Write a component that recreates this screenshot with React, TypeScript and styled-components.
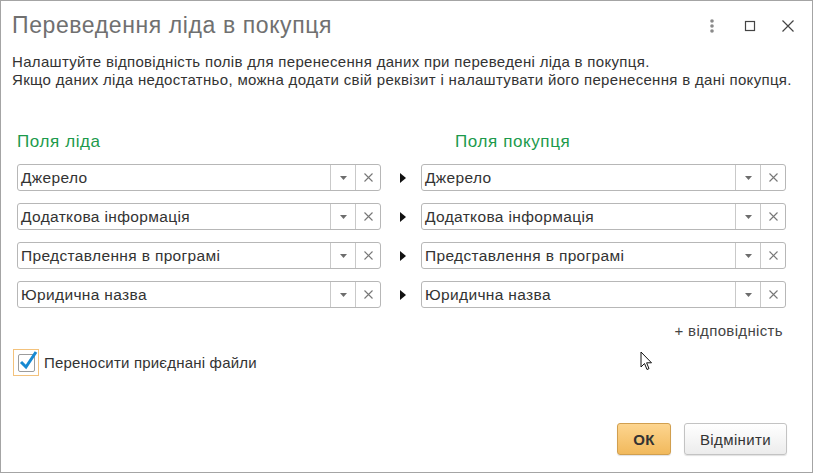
import React, { useState } from 'react';
import styled, { createGlobalStyle } from 'styled-components';

const GlobalStyle = createGlobalStyle`
  html, body {
    margin: 0;
    padding: 0;
    background: #fff;
  }
  body {
    font-family: "Liberation Sans", Arial, sans-serif;
    color: #333;
  }
  * {
    box-sizing: border-box;
  }
`;

const Window = styled.div`
  position: relative;
  width: 813px;
  height: 473px;
  border: 1px solid #a4a4a4;
  background: #fff;
  display: flex;
  flex-direction: column;
`;

const Header = styled.div`
  height: 49px;
  display: flex;
  align-items: center;
  padding: 0 16px 0 11px;
`;

const Title = styled.div`
  flex: 1;
  font-size: 23px;
  letter-spacing: 0.6px;
  color: #707070;
`;

const HeaderTools = styled.div`
  display: flex;
  align-items: center;
  gap: 22px;
`;

const ToolButton = styled.button`
  width: 16px;
  height: 16px;
  padding: 0;
  border: none;
  background: none;
  display: flex;
  align-items: center;
  justify-content: center;
  cursor: pointer;
`;

const Description = styled.div`
  margin-top: 3px;
  padding: 0 11px;
  font-size: 15px;
  letter-spacing: 0.32px;
  line-height: 18px;
  color: #333;
`;

const Columns = styled.div`
  margin-top: 43px;
  padding: 0 26px 0 16px;
  display: grid;
  grid-template-columns: 364px 40px 1fr;
  row-gap: 12px;
  align-items: center;
`;

const ColumnTitle = styled.div<{ $indent?: number }>`
  font-size: 17px;
  letter-spacing: 0.6px;
  line-height: 20px;
  color: #1c9a4c;
  padding-left: ${p => p.$indent || 0}px;
`;

const Field = styled.div`
  height: 27px;
  display: flex;
  border: 1px solid #b7b7b7;
  border-radius: 3px;
  background: #fff;
`;

const FieldText = styled.div`
  flex: 1;
  padding-left: 3px;
  font-size: 15.5px;
  letter-spacing: 0.35px;
  line-height: 26px;
  color: #333;
  white-space: nowrap;
  overflow: hidden;
`;

const FieldButton = styled.div<{ $width: number }>`
  width: ${p => p.$width}px;
  border-left: 1px solid #c9c9c9;
  display: flex;
  align-items: center;
  justify-content: center;
`;

const Transfer = styled.div`
  display: flex;
  justify-content: center;
  padding-left: 3px;
`;

const AddLink = styled.div`
  margin-top: 14px;
  padding-right: 29px;
  text-align: right;
  font-size: 15px;
  letter-spacing: 0.35px;
  line-height: 18px;
  color: #444;
  cursor: pointer;
`;

const CheckRow = styled.label`
  margin-top: 9px;
  margin-left: 12px;
  display: flex;
  align-items: center;
  gap: 5px;
  cursor: pointer;
`;

const CheckFrame = styled.span`
  width: 26px;
  height: 27px;
  border: 1px solid #f3c27c;
  display: flex;
  align-items: center;
  justify-content: center;
`;

const CheckBox = styled.span`
  width: 17px;
  height: 18px;
  border: 1px solid #9c9c9c;
  border-radius: 2px;
  position: relative;
`;

const CheckMark = styled.svg`
  position: absolute;
  left: -1px;
  top: -6px;
`;

const CheckLabel = styled.span`
  font-size: 15px;
  letter-spacing: 0.2px;
  color: #333;
`;

const Footer = styled.div`
  margin-top: auto;
  padding: 0 25px 17px 0;
  display: flex;
  justify-content: flex-end;
  gap: 13px;
`;

const DialogButton = styled.button<{ $primary?: boolean }>`
  height: 32px;
  padding: 0 14px;
  min-width: ${p => (p.$primary ? 54 : 103)}px;
  border-radius: 3px;
  font-family: "Liberation Sans", Arial, sans-serif;
  font-size: 15px;
  letter-spacing: 0.4px;
  font-weight: ${p => (p.$primary ? 700 : 400)};
  color: #333;
  border: 1px solid ${p => (p.$primary ? '#d19f4f' : '#c3c3c3')};
  background: ${p =>
    p.$primary
      ? 'linear-gradient(#fdd58f, #f1b95c)'
      : 'linear-gradient(#ffffff, #ececec)'};
  box-shadow: 0 1px 1px rgba(0, 0, 0, 0.12);
  cursor: pointer;
`;

const Pointer = styled.svg`
  position: absolute;
  left: 639px;
  top: 350px;
  pointer-events: none;
`;

const DotsIcon = () => (
  <svg width="6" height="16" viewBox="0 0 6 16">
    <circle cx="3" cy="3" r="1.8" fill="#8a8a8a" />
    <circle cx="3" cy="8" r="1.8" fill="#8a8a8a" />
    <circle cx="3" cy="13" r="1.8" fill="#8a8a8a" />
  </svg>
);

const MaximizeIcon = () => (
  <svg width="12" height="12" viewBox="0 0 12 12">
    <rect x="1.5" y="1.5" width="9" height="9" fill="none" stroke="#444" strokeWidth="1.2" />
  </svg>
);

const CloseIcon = () => (
  <svg width="14" height="14" viewBox="0 0 14 14">
    <path d="M1.5 1.5 L12.5 12.5 M12.5 1.5 L1.5 12.5" stroke="#444" strokeWidth="1.2" />
  </svg>
);

const DropIcon = () => (
  <svg width="7" height="4" viewBox="0 0 7 4">
    <path d="M0 0 H7 L3.5 4 Z" fill="#6d6d6d" />
  </svg>
);

const ClearIcon = () => (
  <svg width="9" height="9" viewBox="0 0 9 9">
    <path d="M0.5 0.5 L8.5 8.5 M8.5 0.5 L0.5 8.5" stroke="#777" strokeWidth="1.1" />
  </svg>
);

const ArrowIcon = () => (
  <svg width="6" height="10" viewBox="0 0 6 10">
    <path d="M0 0 L6 5 L0 10 Z" fill="#111" />
  </svg>
);

const SelectField = ({ value }: { value: string }) => (
  <Field>
    <FieldText>{value}</FieldText>
    <FieldButton $width={25}>
      <DropIcon />
    </FieldButton>
    <FieldButton $width={25}>
      <ClearIcon />
    </FieldButton>
  </Field>
);

const mapping: [string, string][] = [
  ['Джерело', 'Джерело'],
  ['Додаткова інформація', 'Додаткова інформація'],
  ['Представлення в програмі', 'Представлення в програмі'],
  ['Юридична назва', 'Юридична назва'],
];

export default function App() {
  const [withFiles, setWithFiles] = useState(true);

  return (
    <>
      <GlobalStyle />
      <Window>
        <Header>
          <Title>Переведення ліда в покупця</Title>
          <HeaderTools>
            <ToolButton>
              <DotsIcon />
            </ToolButton>
            <ToolButton>
              <MaximizeIcon />
            </ToolButton>
            <ToolButton>
              <CloseIcon />
            </ToolButton>
          </HeaderTools>
        </Header>

        <Description>
          Налаштуйте відповідність полів для перенесення даних при переведені ліда в покупця.
          <br />
          Якщо даних ліда недостатньо, можна додати свій реквізит і налаштувати його перенесення в дані покупця.
        </Description>

        <Columns>
          <ColumnTitle>Поля ліда</ColumnTitle>
          <div />
          <ColumnTitle $indent={34}>Поля покупця</ColumnTitle>
          {mapping.map(([from, to], i) => (
            <React.Fragment key={i}>
              <SelectField value={from} />
              <Transfer>
                <ArrowIcon />
              </Transfer>
              <SelectField value={to} />
            </React.Fragment>
          ))}
        </Columns>

        <AddLink>+ відповідність</AddLink>

        <CheckRow onClick={() => setWithFiles(v => !v)}>
          <CheckFrame>
            <CheckBox>
              {withFiles && (
                <CheckMark width="20" height="22" viewBox="0 0 20 22">
                  <path d="M3 13 L8 18 L18 3" fill="none" stroke="#1689d2" strokeWidth="3" />
                </CheckMark>
              )}
            </CheckBox>
          </CheckFrame>
          <CheckLabel>Переносити приєднані файли</CheckLabel>
        </CheckRow>

        <Footer>
          <DialogButton $primary>ОК</DialogButton>
          <DialogButton>Відмінити</DialogButton>
        </Footer>

        <Pointer width="13" height="21" viewBox="0 0 13 21">
          <path
            d="M1 1 V16 L4.5 12.5 L7 18.5 L9 17.6 L6.6 11.8 H11.5 Z"
            fill="#fff"
            stroke="#111"
            strokeWidth="1"
            strokeLinejoin="round"
          />
        </Pointer>
      </Window>
    </>
  );
}
